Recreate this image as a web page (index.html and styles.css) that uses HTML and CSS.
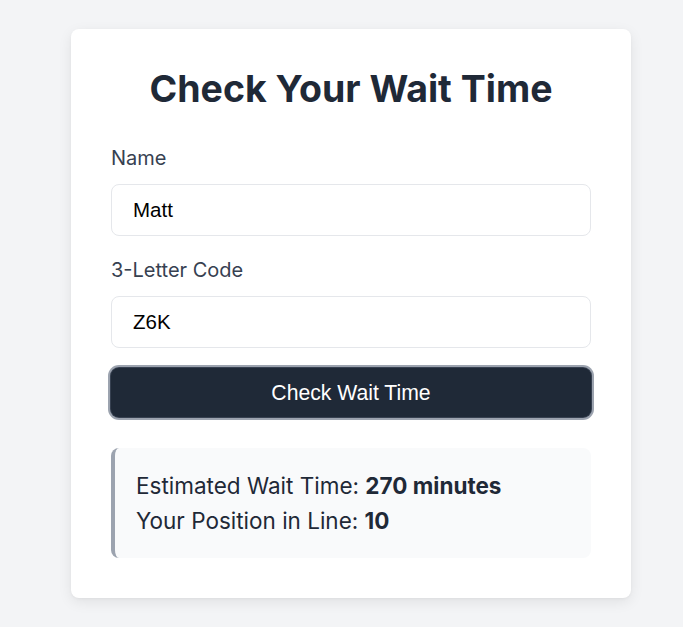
FILE: index.html
```html
<!DOCTYPE html>
<html>
<head>
<meta charset="utf-8">
<link rel="stylesheet" href="styles.css">
</head>
<body>
<main class="card">
  <h1 class="title">Check Your Wait Time</h1>
  <form class="form">
    <label class="label" for="name">Name</label>
    <input class="input" id="name" type="text" value="Matt">
    <label class="label label-second" for="code">3-Letter Code</label>
    <input class="input" id="code" type="text" value="Z6K">
    <button class="button" type="button">Check Wait Time</button>
  </form>
  <div class="result">
    <p class="result-line">Estimated Wait Time: <strong>270 minutes</strong></p>
    <p class="result-line">Your Position in Line: <strong>10</strong></p>
  </div>
</main>
</body>
</html>
```

FILE: styles.css
```css
html, body {
  margin: 0;
  padding: 0;
  background: #f3f4f6;
}
body {
  font-family: Inter, "Liberation Sans", sans-serif;
  color: #1f2937;
  padding-top: 29px;
  min-height: 627px;
  box-sizing: border-box;
}
.card {
  box-sizing: border-box;
  width: 560px;
  margin-left: 71px;
  background: #ffffff;
  border-radius: 8px;
  padding: 40px;
  box-shadow: 0 4px 14px rgba(0, 0, 0, 0.08), 0 1px 3px rgba(0, 0, 0, 0.04);
}
.title {
  margin: 0 0 35px;
  font-size: 37.5px;
  line-height: 40px;
  font-weight: 700;
  text-align: center;
  color: #1f2937;
}
.form {
  display: flex;
  flex-direction: column;
}
.label {
  font-size: 20px;
  line-height: 28px;
  color: #374151;
  margin-bottom: 12px;
}
.label-second {
  margin-top: 20px;
}
.input {
  box-sizing: border-box;
  height: 52px;
  padding: 12px 21px;
  font-family: "Liberation Sans", Arial, sans-serif;
  font-size: 20.5px;
  line-height: 28px;
  color: #000;
  border: 1px solid #e5e7eb;
  border-radius: 8px;
  background: #fff;
  outline: none;
}
.button {
  margin-top: 20px;
  height: 49px;
  font-family: "Liberation Sans", Arial, sans-serif;
  font-size: 21.2px;
  color: #ffffff;
  background: #1f2937;
  border: none;
  border-radius: 8px;
  box-shadow: 0 0 0 1px #374151, 0 0 0 3px #9ca3af;
}
.result {
  margin-top: 31px;
  background: #f9fafb;
  border-left: 4px solid #9ca3af;
  border-radius: 8px;
  padding: 20px 21px;
}
.result-line {
  margin: 0;
  font-size: 22.5px;
  line-height: 35px;
  color: #1f2937;
}
.result-line strong {
  font-weight: 700;
}
```
